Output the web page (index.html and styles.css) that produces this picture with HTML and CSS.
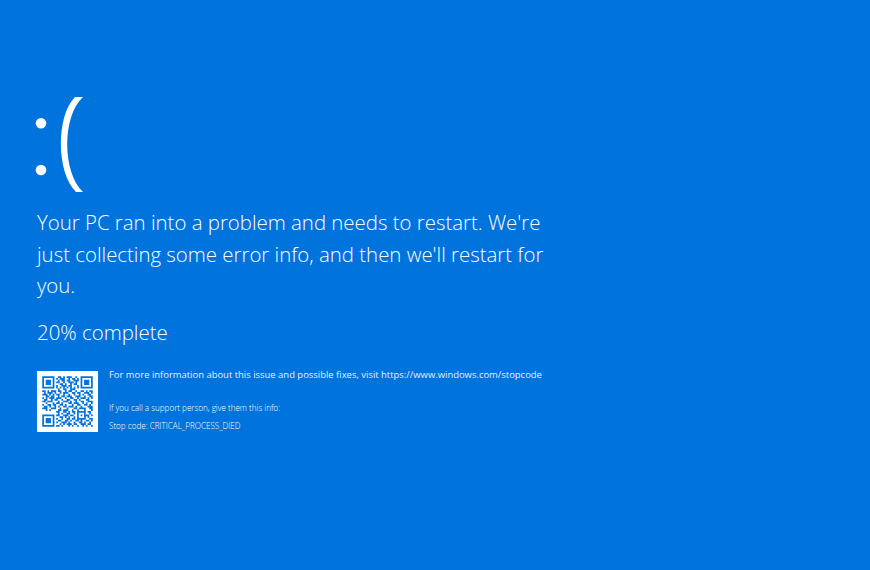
FILE: index.html
```html
<!DOCTYPE html>
<html lang="en">

<head>
  <meta charset="UTF-8">
  <meta name="viewport" content="width=device-width, initial-scale=1.0">
  <title>Stop code</title>
  <link rel="stylesheet" href="styles.css">
</head>

<body>
  <main class="screen">
    <svg class="sad-face" width="56" height="98" viewBox="0 0 56 98" role="img" aria-label=":(">
      <circle cx="9" cy="27.3" r="5.3" fill="#fff" />
      <circle cx="9" cy="74" r="5.3" fill="#fff" />
      <path d="M43 1 C24 20 24 76 44 96 L51 96 C30 76 30 20 51 1 Z" fill="#fff" />
    </svg>

    <p class="message">Your PC ran into a problem and needs to restart. We're just collecting some error info, and then we'll restart for you.</p>
    <p class="progress">20% complete</p>

    <div class="details">
      <svg class="qr" width="61" height="61" viewBox="-3 -3 35 35">
        <rect x="-3" y="-3" width="35" height="35" fill="#fff" />
        <!-- finder squares -->
        <path fill="#0073dd" fill-rule="evenodd" d="M0 0h7v7H0zM1 1v5h5V1zM2 2h3v3H2zM22 0h7v7h-7zM23 1v5h5V1zM24 2h3v3h-3zM0 22h7v7H0zM1 23v5h5v-5zM2 24h3v3H2z" />
        <!-- data modules, one row per line -->
        <path stroke="#0073dd" stroke-width="1" fill="none" d="
          M9 .5h2M12 .5h1M14 .5h3M19 .5h1
          M8 1.5h1M10 1.5h3M15 1.5h1M17 1.5h2M20 1.5h1
          M9 2.5h1M11 2.5h2M14 2.5h2M18 2.5h3
          M8 3.5h2M12 3.5h1M15 3.5h3M19 3.5h1
          M10 4.5h2M13 4.5h1M16 4.5h1M18 4.5h2
          M8 5.5h1M11 5.5h3M15 5.5h2M20 5.5h1
          M8 6.5h1M10 6.5h1M12 6.5h1M14 6.5h1M16 6.5h1M18 6.5h1M20 6.5h1
          M9 7.5h1M12 7.5h2M16 7.5h3
          M0 8.5h2M3 8.5h1M5 8.5h3M9 8.5h2M13 8.5h1M15 8.5h2M19 8.5h1M22 8.5h2M25 8.5h1M27 8.5h2
          M1 9.5h1M3 9.5h3M7 9.5h1M10 9.5h1M12 9.5h3M17 9.5h2M20 9.5h2M24 9.5h3M28 9.5h1
          M0 10.5h3M4 10.5h1M6 10.5h1M8 10.5h2M12 10.5h1M15 10.5h1M18 10.5h1M21 10.5h1M23 10.5h1M26 10.5h2
          M2 11.5h2M5 11.5h2M9 11.5h1M11 11.5h2M14 11.5h3M19 11.5h3M24 11.5h1M27 11.5h2
          M0 12.5h1M2 12.5h1M4 12.5h3M8 12.5h3M13 12.5h1M16 12.5h2M20 12.5h1M22 12.5h3M26 12.5h1M28 12.5h1
          M1 13.5h2M5 13.5h1M7 13.5h2M11 13.5h1M14 13.5h2M18 13.5h2M21 13.5h1M25 13.5h2
          M0 14.5h2M3 14.5h3M9 14.5h1M12 14.5h3M16 14.5h1M19 14.5h1M22 14.5h2M26 14.5h3
          M2 15.5h1M6 15.5h1M8 15.5h2M11 15.5h1M15 15.5h2M18 15.5h3M23 15.5h1M25 15.5h1M28 15.5h1
          M0 16.5h1M3 16.5h2M6 16.5h2M10 16.5h2M13 16.5h1M17 16.5h1M20 16.5h2M24 16.5h2M27 16.5h1
          M1 17.5h2M4 17.5h1M7 17.5h1M9 17.5h1M12 17.5h2M15 17.5h3M19 17.5h1M22 17.5h1M26 17.5h3
          M0 18.5h3M5 18.5h3M10 18.5h1M14 18.5h1M18 18.5h2M21 18.5h4M27 18.5h2
          M2 19.5h1M4 19.5h1M9 19.5h2M12 19.5h3M17 19.5h1M20 19.5h1M24 19.5h1M28 19.5h1
          M8 20.5h2M12 20.5h2M15 20.5h1M17 20.5h2M20 20.5h5M26 20.5h2
          M9 21.5h1M11 21.5h1M14 21.5h2M18 21.5h1M20 21.5h1M24 21.5h1M27 21.5h1
          M8 22.5h2M12 22.5h3M16 22.5h2M20 22.5h1M22 22.5h1M24 22.5h3M28 22.5h1
          M10 23.5h2M13 23.5h1M15 23.5h1M18 23.5h1M20 23.5h1M24 23.5h1M26 23.5h1
          M8 24.5h1M11 24.5h1M14 24.5h2M17 24.5h2M20 24.5h5M27 24.5h2
          M9 25.5h2M13 25.5h2M16 25.5h1M19 25.5h2M22 25.5h1M25 25.5h2M28 25.5h1
          M8 26.5h1M11 26.5h3M15 26.5h1M18 26.5h1M21 26.5h2M24 26.5h1M27 26.5h1
          M10 27.5h1M12 27.5h1M14 27.5h3M18 27.5h2M22 27.5h3M26 27.5h2
          M8 28.5h2M11 28.5h1M15 28.5h1M17 28.5h1M20 28.5h1M23 28.5h1M25 28.5h1M28 28.5h1" />
      </svg>
      <div class="info">
        <p class="visit">For more information about this issue and possible fixes, visit https://www.windows.com/stopcode</p>
        <p class="support">If you call a support person, give them this info:</p>
        <p class="code">Stop code: CRITICAL_PROCESS_DIED</p>
      </div>
    </div>
  </main>
</body>

</html>
```

FILE: styles.css
```css
* {
  margin: 0;
  padding: 0;
  box-sizing: border-box;
}

body {
  background-color: #0073dd;
  color: #fff;
  font-family: 'Open Sans', sans-serif;
  font-weight: 300;
  min-height: 100vh;
  overflow: hidden;
}

.screen {
  padding: 96px 0 0 37px;
}

.sad-face {
  display: block;
  margin-left: -5px;
  margin-bottom: 13px;
}

.message {
  width: 520px;
  font-size: 20.4px;
  line-height: 31.5px;
}

.progress {
  margin-top: 14.5px;
  font-size: 20.4px;
  line-height: 32px;
}

.details {
  display: flex;
  margin-top: 23px;
}

.qr {
  display: block;
  flex-shrink: 0;
}

.info {
  margin-left: 11px;
}

.visit {
  font-size: 9.45px;
  font-weight: 400;
  line-height: 7px;
  color: #e6f1fc;
}

.support {
  margin-top: 24px;
  font-size: 8.1px;
  line-height: 12px;
}

.code {
  margin-top: 6px;
  font-size: 8.1px;
  line-height: 12px;
}
```
